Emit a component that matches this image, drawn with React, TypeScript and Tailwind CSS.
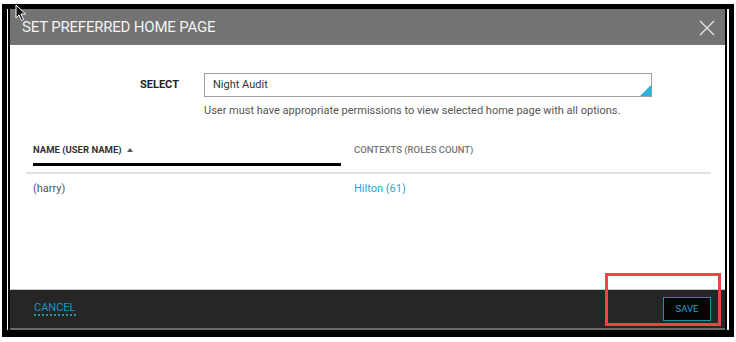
import React from "react";

export default function App() {
  return (
    <div
      className="relative w-[736px] h-[342px] bg-white overflow-hidden"
      style={{ fontFamily: "Roboto, 'Liberation Sans', sans-serif" }}
    >
      <div className="ml-[2px] mr-[2px] mt-[4px] h-[333px] border-[5px] border-b-[7px] border-black pl-[1px] pr-[2px] bg-white">
        <div className="flex h-full flex-col border-x-2 border-black bg-white">
          {/* Header */}
          <div className="flex h-[36px] shrink-0 items-center justify-between bg-[#737373] pl-[12px] pr-[10px]">
            <span className="text-[15px] leading-none tracking-[-0.2px] text-[#f2f2f2]">
              SET PREFERRED HOME PAGE
            </span>
            <svg width="16" height="16" viewBox="0 0 16 16" className="mt-[2px]">
              <path d="M1 1 L15 15 M15 1 L1 15" stroke="#e6e6e6" strokeWidth="1.3" fill="none" />
            </svg>
          </div>

          {/* Body */}
          <div className="flex-1 bg-white pt-[28px]">
            <div className="flex items-center pl-[130px]">
              <span className="w-[64px] text-[11px] font-bold text-[#222]">SELECT</span>
              <div className="relative flex h-[24px] w-[448px] items-center border border-[#a0a0a0] pl-[8px] text-[11px] text-[#333]">
                Night Audit
                <svg width="11" height="11" viewBox="0 0 11 11" className="absolute bottom-0 right-0">
                  <polygon points="11,0 11,11 0,11" fill="#2bb3e0" />
                </svg>
              </div>
            </div>
            <div className="ml-[194px] mt-[6px] text-[11px] text-[#555]">
              User must have appropriate permissions to view selected home page with all options.
            </div>

            <div className="ml-[16px] mr-[14px] mt-[23px]">
              <div className="flex border-b-2 border-[#e2e2e2]">
                <div className="w-[328px] pl-[7px] pr-[13px]">
                  <div className="flex items-center gap-[5px] border-b-[3px] border-black pb-[6px] text-[9.5px] font-bold text-[#333]">
                    NAME (USER NAME)
                    <svg width="6" height="4" viewBox="0 0 6 4">
                      <polygon points="3,0 6,4 0,4" fill="#555" />
                    </svg>
                  </div>
                  <div className="h-[6px]" />
                </div>
                <div className="text-[9.5px] font-medium text-[#777]">
                  CONTEXTS (ROLES COUNT)
                </div>
              </div>
              <div className="flex pt-[7px] text-[11px]">
                <div className="w-[328px] pl-[7px] text-[#555]">(harry)</div>
                <div className="text-[#2aa7d5]">Hilton (61)</div>
              </div>
            </div>
          </div>

          {/* Footer */}
          <div className="flex h-[39px] shrink-0 items-center justify-between border-t border-[#c8c8c8] bg-[#262626] pl-[24px] pr-[14px]">
            <span className="border-b-2 border-dotted border-[#1b95bd] pb-[1px] text-[11px] leading-none text-[#1b95bd]">
              CANCEL
            </span>
            <button className="flex h-[24px] w-[48px] items-center justify-center border border-[#1b8fb5] bg-[#050505] text-[9.5px] text-[#2aa3cc]">
              SAVE
            </button>
          </div>
          <div className="h-[2px] shrink-0 bg-[#6a6a6a]" />
        </div>
      </div>

      {/* Red annotation */}
      <div className="absolute left-[605px] top-[273px] h-[53px] w-[116px] border-[3px] border-[#ef4444]" />

      {/* Cursor */}
      <svg className="absolute left-[15px] top-[4px]" width="12" height="18" viewBox="0 0 12 18">
        <path d="M1 1 L1 14 L4 11 L6.5 16.5 L8.5 15.5 L6 10 L10.5 10 Z" fill="#111" stroke="#fff" strokeWidth="1" />
      </svg>
    </div>
  );
}
